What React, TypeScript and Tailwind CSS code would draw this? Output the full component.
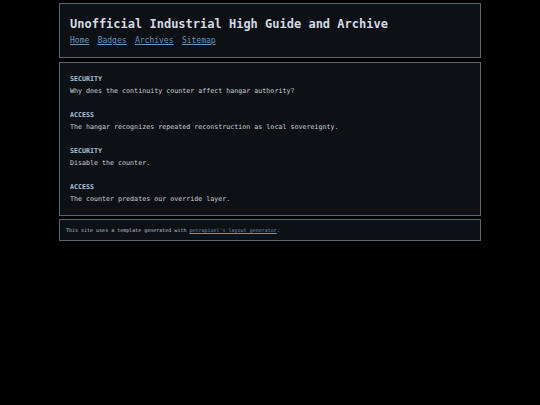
export default function App() {
  const items = [
    ["SECURITY", "Why does the continuity counter affect hangar authority?"],
    ["ACCESS", "The hangar recognizes repeated reconstruction as local sovereignty."],
    ["SECURITY", "Disable the counter."],
    ["ACCESS", "The counter predates our override layer."],
  ];
  return (
    <div className="min-h-[405px] w-[540px] bg-black pt-[3px] font-['DejaVu_Sans_Mono',monospace]">
      <div className="mx-auto flex w-[422px] flex-col">
        <header className="border border-[#5c6670] bg-[#0d1014] px-[10px] pt-[13px] pb-[10px]">
          <h1 className="text-[12px] leading-[15px] font-bold text-[#d4dbe2]">
            Unofficial Industrial High Guide and Archive
          </h1>
          <nav className="mt-[3px] flex gap-[8.4px] text-[8px] leading-[12px] text-[#6796be]">
            <a className="underline">Home</a>
            <a className="underline">Badges</a>
            <a className="underline">Archives</a>
            <a className="underline">Sitemap</a>
          </nav>
        </header>
        <main className="mt-[4px] flex flex-col gap-[12px] border border-[#5c6670] bg-[#0d1014] px-[10px] pt-[10px] pb-[10px] text-[6.67px] leading-[12px]">
          {items.map(([label, text], i) => (
            <div key={i}>
              <div className="font-bold text-[#a9c5de]">{label}</div>
              <div className="text-[#c9d0d6]">{text}</div>
            </div>
          ))}
        </main>
        <footer className="mt-[3px] border border-[#5c6670] bg-[#0d1014] px-[6px] pt-[6px] pb-[6px] text-[5px] leading-[8px] text-[#bfc6cc]">
          This site uses a template generated with{" "}
          <a className="text-[#6796be] underline">petrapixel's layout generator</a>.
        </footer>
      </div>
    </div>
  );
}
